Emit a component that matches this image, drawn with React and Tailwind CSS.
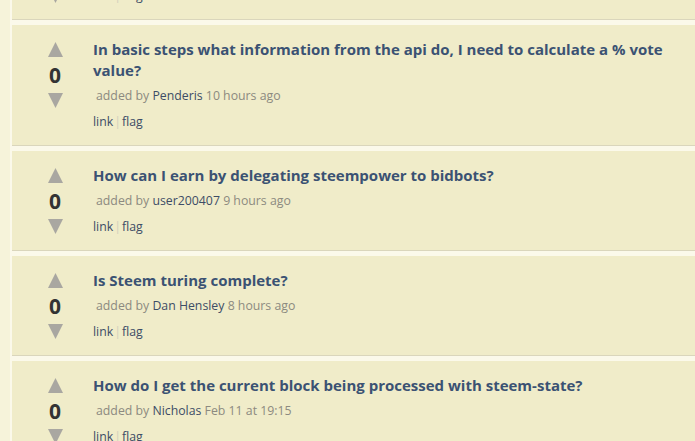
import React from 'react';

const questions = [
  { title: 'Where can I find the full list of steem api methods?', user: 'someone', when: '11 hours ago' },
  { title: 'In basic steps what information from the api do, I need to calculate a % vote value?', user: 'Penderis', when: '10 hours ago' },
  { title: 'How can I earn by delegating steempower to bidbots?', user: 'user200407', when: '9 hours ago' },
  { title: 'Is Steem turing complete?', user: 'Dan Hensley', when: '8 hours ago' },
  { title: 'How do I get the current block being processed with steem-state?', user: 'Nicholas', when: 'Feb 11 at 19:15' },
];

function Arrow({ down }) {
  return (
    <svg width="15" height="15" viewBox="0 0 15 15" className="block">
      <polygon points={down ? '0,0 15,0 7.5,15' : '7.5,0 15,15 0,15'} fill="#a9a7a1" />
    </svg>
  );
}

function Question({ q }) {
  return (
    <div className="flex bg-[#f0ecc9] pl-[36px] pr-[20px]">
      {/* votes */}
      <div className="flex w-[14px] flex-col items-center pt-[17px]">
        <Arrow />
        <div className="mt-[6px] text-[21px] font-bold leading-[24px] text-[#333]">0</div>
        <div className="mt-[6px]">
          <Arrow down />
        </div>
      </div>

      <div className="ml-[31px] flex-1 pt-[14px] pb-[14px]">
        <div className="text-[15px] font-bold leading-[21px] text-[#3b5273]">{q.title}</div>
        <div className="mt-[6px] pl-[3px] text-[12.3px] leading-[18px] text-[#8c8a80]">
          added by <span className="text-[#3d4d66]">{q.user}</span> {q.when}
        </div>
        <div className="mt-[8px] text-[12.3px] leading-[18px] text-[#3d4d66]">
          link<span className="mx-[1px] text-[#d2cfbd]">|</span>flag
        </div>
      </div>
    </div>
  );
}

export default function App() {
  return (
    <div
      className="h-[441px] w-[695px] overflow-hidden bg-[#f6f3da]"
      style={{ fontFamily: '"Open Sans", "Noto Sans", sans-serif' }}
    >
      <div className="flex">
        <div className="w-[10px] shrink-0 bg-[#f6f3da]" />
        <div className="flex-1 border-l-2 border-[#fbf9ea] -mt-[80px]">
          {questions.map((q, i) => (
            <div key={i}>
              {i > 0 && <div className="h-[6px] border-t border-[#dad6bc] bg-[#fbf9ea]" />}
              <Question q={q} />
            </div>
          ))}
        </div>
      </div>
    </div>
  );
}
